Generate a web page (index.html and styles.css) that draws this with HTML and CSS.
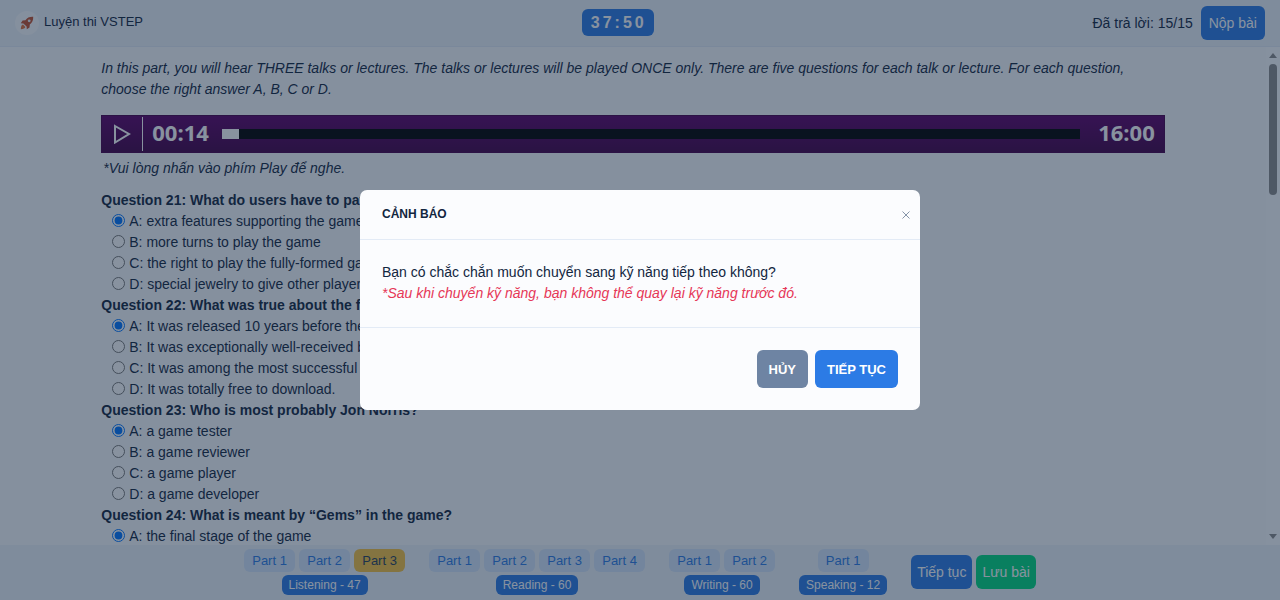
FILE: index.html
```html
<!DOCTYPE html>
<html lang="vi">
<head>
    <meta charset="utf-8">
    <title>Luyện thi VSTEP</title>
    <link rel="stylesheet" href="styles.css">
</head>
<body>
    <header class="topbar">
        <a class="brand" href="#">
            <span class="brand-logo">
                <svg width="14" height="14" viewBox="0 0 14 14">
                    <path d="M13.2 0.8C9.6 0.6 7.2 1.8 5.4 4.2L2.6 4.5L0.8 7.2L3.4 7.4L6.6 10.6L6.8 13.2L9.5 11.4L9.8 8.6C12.2 6.8 13.4 4.4 13.2 0.8Z" fill="#c2502e"/>
                    <circle cx="9.2" cy="4.8" r="1.4" fill="#edf2f9"/>
                    <path d="M3 8.6C1.4 9 1 10.6 0.8 13.2C3.4 13 5 12.6 5.4 11Z" fill="#e0703a"/>
                </svg>
            </span>
            <span>Luyện thi VSTEP</span>
        </a>
        <span class="timer">37:50</span>
        <div class="topbar-right">
            <span>Đã trả lời: 15/15</span>
            <button class="btn btn-primary" type="button">Nộp bài</button>
        </div>
    </header>

    <div class="main">
        <main class="content">
            <div class="container">
                <p class="intro">In this part, you will hear THREE talks or lectures. The talks or lectures will be played ONCE only. There are five questions for each talk or lecture. For each question, choose the right answer A, B, C or D.</p>

                <div class="player">
                    <button class="player-play" type="button" aria-label="Play">
                        <svg width="18" height="20" viewBox="0 0 18 20">
                            <path d="M2 2L16 10L2 18.5Z" fill="none" stroke="#fff" stroke-width="2"/>
                        </svg>
                    </button>
                    <span class="player-time">00:14</span>
                    <div class="player-track"><div class="player-progress" style="width: 2%"></div></div>
                    <span class="player-time">16:00</span>
                </div>
                <p class="note">*Vui lòng nhấn vào phím Play để nghe.</p>

                <fieldset class="question">
                    <legend>Question 21: What do users have to pay for?</legend>
                    <label><input type="radio" name="q21" checked>A: extra features supporting the game</label>
                    <label><input type="radio" name="q21">B: more turns to play the game</label>
                    <label><input type="radio" name="q21">C: the right to play the fully-formed game</label>
                    <label><input type="radio" name="q21">D: special jewelry to give other players</label>
                </fieldset>
                <fieldset class="question">
                    <legend>Question 22: What was true about the first game?</legend>
                    <label><input type="radio" name="q22" checked>A: It was released 10 years before the second.</label>
                    <label><input type="radio" name="q22">B: It was exceptionally well-received by players.</label>
                    <label><input type="radio" name="q22">C: It was among the most successful games.</label>
                    <label><input type="radio" name="q22">D: It was totally free to download.</label>
                </fieldset>
                <fieldset class="question">
                    <legend>Question 23: Who is most probably Jon Norris?</legend>
                    <label><input type="radio" name="q23" checked>A: a game tester</label>
                    <label><input type="radio" name="q23">B: a game reviewer</label>
                    <label><input type="radio" name="q23">C: a game player</label>
                    <label><input type="radio" name="q23">D: a game developer</label>
                </fieldset>
                <fieldset class="question">
                    <legend>Question 24: What is meant by “Gems” in the game?</legend>
                    <label><input type="radio" name="q24" checked>A: the final stage of the game</label>
                </fieldset>
            </div>
        </main>
        <div class="rail" aria-hidden="true">
            <span class="rail-up"></span>
            <span class="rail-thumb"></span>
            <span class="rail-down"></span>
        </div>
    </div>

    <footer class="bottombar">
        <div class="skill">
            <div class="parts">
                <button class="part" type="button">Part 1</button>
                <button class="part" type="button">Part 2</button>
                <button class="part active" type="button">Part 3</button>
            </div>
            <span class="skill-name">Listening - 47</span>
        </div>
        <div class="skill">
            <div class="parts">
                <button class="part" type="button">Part 1</button>
                <button class="part" type="button">Part 2</button>
                <button class="part" type="button">Part 3</button>
                <button class="part" type="button">Part 4</button>
            </div>
            <span class="skill-name">Reading - 60</span>
        </div>
        <div class="skill">
            <div class="parts">
                <button class="part" type="button">Part 1</button>
                <button class="part" type="button">Part 2</button>
            </div>
            <span class="skill-name">Writing - 60</span>
        </div>
        <div class="skill">
            <div class="parts">
                <button class="part" type="button">Part 1</button>
            </div>
            <span class="skill-name">Speaking - 12</span>
        </div>
        <div class="actions">
            <button class="btn btn-primary" type="button">Tiếp tục</button>
            <button class="btn btn-success" type="button">Lưu bài</button>
        </div>
    </footer>

    <div class="backdrop">
        <div class="modal" role="dialog" aria-labelledby="modalTitle">
            <div class="modal-header">
                <h4 id="modalTitle">CẢNH BÁO</h4>
                <button class="close" type="button" aria-label="Close">
                    <svg width="8" height="8" viewBox="0 0 8 8">
                        <path d="M0.5 0.5L7.5 7.5M7.5 0.5L0.5 7.5" stroke="#8594a8" stroke-width="1"/>
                    </svg>
                </button>
            </div>
            <div class="modal-body">
                <p>Bạn có chắc chắn muốn chuyển sang kỹ năng tiếp theo không?</p>
                <p class="warn">*Sau khi chuyển kỹ năng, bạn không thể quay lại kỹ năng trước đó.</p>
            </div>
            <div class="modal-footer">
                <button class="btn btn-secondary" type="button">HỦY</button>
                <button class="btn btn-primary" type="button">TIẾP TỤC</button>
            </div>
        </div>
    </div>
</body>
</html>
```
FILE: styles.css
```css
* {
    box-sizing: border-box;
}
body {
    margin: 0;
    height: 100vh;
    display: flex;
    flex-direction: column;
    overflow: hidden;
    font-family: "Liberation Sans", Arial, sans-serif;
    font-size: 14px;
    line-height: 21px;
    color: #12263f;
    background-color: #f9fbfd;
}
p, h4 {
    margin: 0;
}
button {
    font-family: inherit;
    border: none;
    cursor: pointer;
}
.btn {
    padding: 0 8px;
    height: 34px;
    border-radius: 6px;
    font-size: 14px;
    color: #fff;
}
.btn-primary {
    background-color: #2c7be5;
}
.btn-success {
    background-color: #00d97e;
}
.btn-secondary {
    background-color: #6e84a3;
}

/* top bar */
.topbar {
    display: flex;
    justify-content: space-between;
    align-items: center;
    height: 47px;
    padding: 0 15px;
    background-color: #edf2f9;
    border-bottom: 1px solid #e3ebf6;
}
.brand {
    display: flex;
    align-items: center;
    gap: 5px;
    font-size: 13px;
    color: inherit;
    text-decoration: none;
    padding-bottom: 4px;
}
.brand-logo {
    display: flex;
    align-items: center;
    justify-content: center;
    width: 24px;
    height: 24px;
    margin-top: 4px;
    border-radius: 50%;
    background-color: #f9fbfd;
}
.timer {
    padding: 3px 7px 3px 9px;
    margin-bottom: 1px;
    border-radius: 6px;
    font: bold 16px/21px "Liberation Sans", Arial, sans-serif;
    letter-spacing: 3px;
    color: #fff;
    background-color: #2c7be5;
}
.topbar-right {
    display: flex;
    justify-content: flex-end;
    align-items: center;
    gap: 8px;
}

/* test content */
.main {
    flex: 1;
    min-height: 0;
    display: flex;
}
.content {
    flex: 1;
    overflow-y: auto;
    scrollbar-width: none;
}
.container {
    width: 84%;
    margin: 0 auto;
    padding-top: 11px;
}
.intro {
    font-style: italic;
    margin-bottom: 15px;
}
.note {
    font-style: italic;
    padding: 5px 2px 11px;
}
.player {
    display: flex;
    align-items: center;
    height: 38px;
    padding-right: 9px;
    border: 1px solid #46004a;
    background: linear-gradient(#5c0067, #420047);
}
.player-play {
    display: flex;
    align-items: center;
    justify-content: center;
    width: 41px;
    height: 34px;
    margin-right: 9px;
    padding: 0;
    background: none;
    border-right: 1px solid #fff;
}
.player-time {
    padding-bottom: 5px;
    font: bold 22px/24px "Open Sans", sans-serif;
    color: #fff;
}
.player-track {
    flex: 1;
    height: 10px;
    margin: 0 18px 0 13px;
    background-color: #000;
}
.player-progress {
    height: 100%;
    background-color: #fff;
}
.question {
    margin: 0;
    padding: 0;
    border: none;
}
.question legend {
    padding: 0;
    font-weight: 700;
}
.question label {
    display: flex;
    align-items: center;
    gap: 4px;
    padding-left: 11px;
}
.question input {
    width: 13px;
    height: 13px;
    margin: 0 0 3px;
}
.rail {
    display: flex;
    flex-direction: column;
    align-items: center;
    width: 14px;
    padding: 6px 0;
    background-color: #fbfcfe;
}
.rail-up, .rail-down {
    border: 4px solid transparent;
}
.rail-up {
    border-top: none;
    border-bottom: 5px solid #8b8b8b;
}
.rail-down {
    margin-top: auto;
    border-bottom: none;
    border-top: 5px solid #8b8b8b;
}
.rail-thumb {
    width: 8px;
    height: 27%;
    margin-top: 6px;
    border-radius: 4px;
    background-color: #8b8b8b;
}

/* bottom bar */
.bottombar {
    display: flex;
    justify-content: center;
    gap: 24px;
    height: 55px;
    padding-top: 4px;
    background-color: #edf2f9;
}
.skill {
    display: flex;
    flex-direction: column;
    align-items: center;
    gap: 3px;
}
.parts {
    display: flex;
    gap: 4px;
}
.part {
    height: 23px;
    width: 51px;
    padding: 0;
    border-radius: 6px;
    font-size: 13px;
    color: #2c7be5;
    background-color: #d5e5fa;
}
.part.active {
    color: #283e59;
    background-color: #f6c343;
}
.skill-name {
    padding: 0 7px;
    border-radius: 6px;
    font-size: 12px;
    line-height: 20px;
    color: #fff;
    background-color: #2c7be5;
}
.actions {
    display: flex;
    gap: 4px;
    padding-top: 6px;
}
.actions .btn {
    padding: 0 6px;
}

/* modal */
.backdrop {
    position: fixed;
    inset: 0;
    display: flex;
    align-items: center;
    justify-content: center;
    background-color: rgba(18, 38, 63, 0.5);
}
.modal {
    width: 560px;
    max-width: 95%;
    border-radius: 7px;
    background-color: #fbfcfe;
}
.modal-header {
    display: flex;
    align-items: center;
    justify-content: space-between;
    padding: 14px 6px 14px 22px;
    border-bottom: 1px solid #e3ebf6;
}
.modal-header h4 {
    font-size: 12px;
    font-weight: 700;
}
.close {
    display: flex;
    padding: 4px;
    background: none;
}
.modal-body {
    padding: 22px 22px 23px;
    border-bottom: 1px solid #e3ebf6;
}
.warn {
    font-style: italic;
    color: #e63757;
}
.modal-footer {
    display: flex;
    justify-content: flex-end;
    gap: 7px;
    padding: 22px;
}
.modal-footer .btn {
    height: 38px;
    padding: 0 12px;
    font-size: 13px;
    font-weight: 700;
}
```
